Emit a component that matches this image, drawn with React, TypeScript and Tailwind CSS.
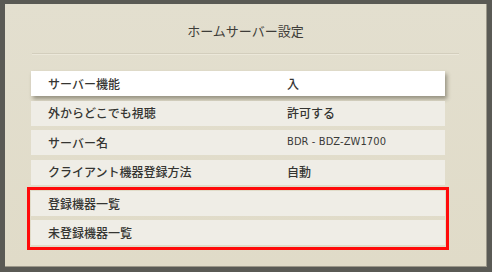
const rows = [
  { label: "サーバー機能", value: "入", active: true },
  { label: "外からどこでも視聴", value: "許可する" },
  { label: "サーバー名", value: "BDR - BDZ-ZW1700", latin: true },
  { label: "クライアント機器登録方法", value: "自動" },
];

const marked = ["登録機器一覧", "未登録機器一覧"];

function Row({
  label,
  value,
  active,
  latin,
}: {
  label: string;
  value?: string;
  active?: boolean;
  latin?: boolean;
}) {
  return (
    <div
      className={
        "flex h-[25px] items-center pl-[17px] text-[12px] font-medium text-[#353532] " +
        (active
          ? "bg-white shadow-[2px_3px_4px_rgba(60,55,40,0.45)]"
          : "bg-[#efede6]")
      }
    >
      <span className="w-[239px] shrink-0">{label}</span>
      {value && (
        <span
          className={
            latin
              ? "font-['DejaVu_Sans_Condensed','Noto_Sans_CJK_JP',sans-serif] text-[11px] tracking-[0.1px] text-[#3a3a38]"
              : ""
          }
        >
          {value}
        </span>
      )}
    </div>
  );
}

export default function App() {
  return (
    <div className="h-[272px] w-[492px] bg-[#5a5a55] p-[4px_5px_5px_5px] font-['Noto_Sans_CJK_JP',sans-serif]">
      <div className="flex h-full flex-col border-r border-b border-[#9c988a] bg-gradient-to-b from-[#e3dfcf] to-[#e0dbc8]">
        <div className="flex h-[49px] items-end justify-center pb-[13px] text-[13px] text-[#3d3c38]">
          ホームサーバー設定
        </div>
        <div className="mx-[27px] h-[2px] border-t border-[#d3cebd] border-b-[#ece8da] border-b" />
        <div className="mt-[16px] flex flex-col gap-[4.6px] pl-[26px] pr-[41px]">
          {rows.map((r) => (
            <Row key={r.label} {...r} />
          ))}
          <div className="-mx-[4px] -mt-[2px] flex flex-col gap-[4px] border-[3px] border-[#ff0a0a] p-[1px] pb-[2px]">
            {marked.map((m) => (
              <Row key={m} label={m} />
            ))}
          </div>
        </div>
      </div>
    </div>
  );
}
